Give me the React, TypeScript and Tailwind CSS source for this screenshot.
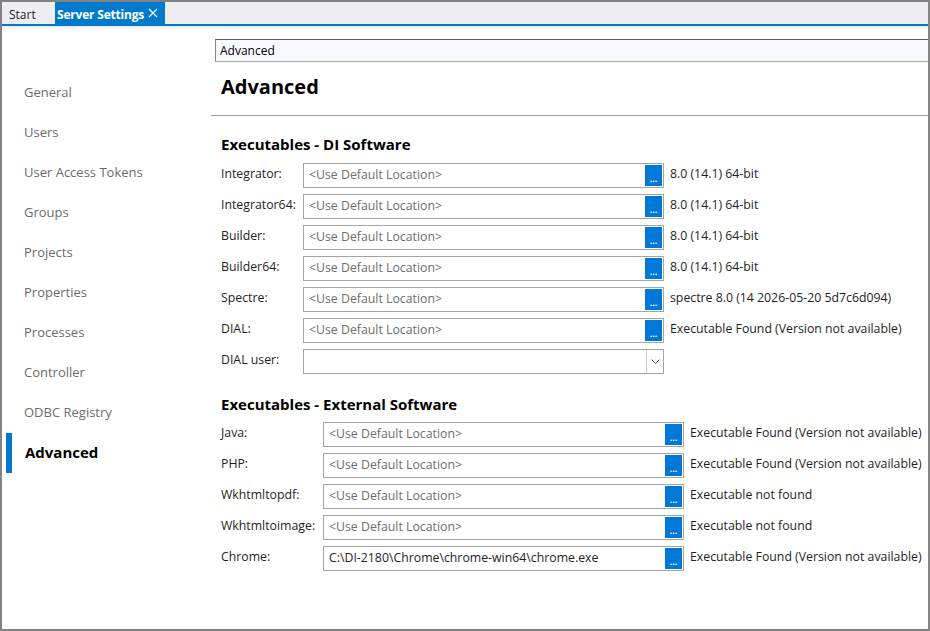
import React from 'react';

const font = { fontFamily: '"Open Sans", "Noto Sans", sans-serif' };

const navItems = ['General', 'Users', 'User Access Tokens', 'Groups', 'Projects', 'Properties', 'Processes', 'Controller', 'ODBC Registry'];

const diRows = [
  { label: 'Integrator:', info: '8.0 (14.1) 64-bit' },
  { label: 'Integrator64:', info: '8.0 (14.1) 64-bit' },
  { label: 'Builder:', info: '8.0 (14.1) 64-bit' },
  { label: 'Builder64:', info: '8.0 (14.1) 64-bit' },
  { label: 'Spectre:', info: 'spectre 8.0 (14 2026-05-20 5d7c6d094)' },
  { label: 'DIAL:', info: 'Executable Found (Version not available)' },
];

const extRows = [
  { label: 'Java:', value: '', info: 'Executable Found (Version not available)' },
  { label: 'PHP:', value: '', info: 'Executable Found (Version not available)' },
  { label: 'Wkhtmltopdf:', value: '', info: 'Executable not found' },
  { label: 'Wkhtmltoimage:', value: '', info: 'Executable not found' },
  { label: 'Chrome:', value: 'C:\\DI-2180\\Chrome\\chrome-win64\\chrome.exe', info: 'Executable Found (Version not available)' },
];

function PathInput({ value }: { value: string }) {
  return (
    <div className="flex h-[25px] w-[361px] items-center border border-[#a5a5a5] bg-white pl-[5px] pr-[1px]">
      <span className={`flex-1 truncate text-[12.3px] ${value ? 'text-[#1e1e1e]' : 'text-[#6d6d6d]'}`}>
        {value || '<Use Default Location>'}
      </span>
      <div className="flex h-[21px] w-[17px] items-end justify-center bg-[#0078d7] pb-[3px]">
        <span className="text-[9px] leading-none font-bold text-white">...</span>
      </div>
    </div>
  );
}

export default function App() {
  return (
    <div className="flex h-[631px] w-[930px] flex-col border-2 border-[#828282] bg-white text-[#1e1e1e]" style={font}>
      {/* tab strip */}
      <div className="flex h-[22px] items-stretch bg-[#eeeef2]">
        <div className="flex w-[53px] items-center pl-[7px] pt-[3px] text-[12px] text-[#1e1e1e]">Start</div>
        <div className="flex w-[110px] items-center gap-[4px] bg-[#007acc] pl-[2px] pt-[3px] text-[12px] font-bold tracking-[-0.2px] text-white">
          Server Settings
          <svg width="10" height="10" viewBox="0 0 10 10" className="mt-[-3px]">
            <path d="M1 1 L9 9 M9 1 L1 9" stroke="white" strokeWidth="1.2" />
          </svg>
        </div>
      </div>
      <div className="h-[2px] bg-[#007acc]" />
      <div className="h-[2px] bg-[#eeeef2]" />

      <div className="flex flex-1">
        {/* left nav */}
        <div className="w-[209px] pt-[45px]">
          {navItems.map((item) => (
            <div key={item} className="flex h-[40px] items-center pl-[22px] text-[13px] text-[#6b6b6b]">
              {item}
            </div>
          ))}
          <div className="flex h-[40px] items-center">
            <div className="ml-[4px] h-[40px] w-[6px] bg-[#0078d4]" />
            <span className="pb-[2px] pl-[13px] text-[15px] font-bold text-black">Advanced</span>
          </div>
        </div>

        {/* right content */}
        <div className="flex-1 pt-[11px]">
          <div className="ml-[4px] flex h-[23px] items-center border border-[#8a8a8a] border-t-[#5c5c5c] border-r-0 border-b-[#a3acb5] bg-[#f8f9fc] pl-[4px] text-[12px] text-black">
            Advanced
          </div>
          <div className="flex h-[53px] items-center pb-[4px] pl-[10px] text-[20px] font-bold text-black">Advanced</div>
          <div className="h-px bg-[#a0a0a0]" />

          <div className="pl-[10px]">
            <div className="flex h-[47px] items-end pb-[8px] text-[15px] font-bold text-black">Executables - DI Software</div>
            <div className="flex flex-col gap-[6px]">
              {diRows.map((r) => (
                <div key={r.label} className="flex items-center">
                  <div className="w-[82px] pb-[2px] text-[12.3px]">{r.label}</div>
                  <PathInput value="" />
                  <div className="pb-[2px] pl-[6px] text-[12.3px]">{r.info}</div>
                </div>
              ))}
              <div className="flex items-center">
                <div className="w-[82px] pb-[2px] text-[12.3px]">DIAL user:</div>
                <div className="flex h-[25px] w-[361px] items-center justify-end border border-[#a5a5a5] bg-white">
                  <div className="flex h-full w-[17px] items-center justify-center border-l border-[#d0d0d0]">
                    <svg width="9" height="6" viewBox="0 0 9 6">
                      <path d="M0.5 0.5 L4.5 4.5 L8.5 0.5" stroke="#606060" fill="none" strokeWidth="1" />
                    </svg>
                  </div>
                </div>
              </div>
            </div>

            <div className="flex h-[48px] items-end pb-[7px] text-[15px] font-bold text-black">Executables - External Software</div>
            <div className="flex flex-col gap-[6px]">
              {extRows.map((r) => (
                <div key={r.label} className="flex items-center">
                  <div className="w-[102px] pb-[2px] text-[12.3px]">{r.label}</div>
                  <PathInput value={r.value} />
                  <div className="pb-[2px] pl-[6px] text-[12.3px]">{r.info}</div>
                </div>
              ))}
            </div>
          </div>
        </div>
      </div>
    </div>
  );
}
